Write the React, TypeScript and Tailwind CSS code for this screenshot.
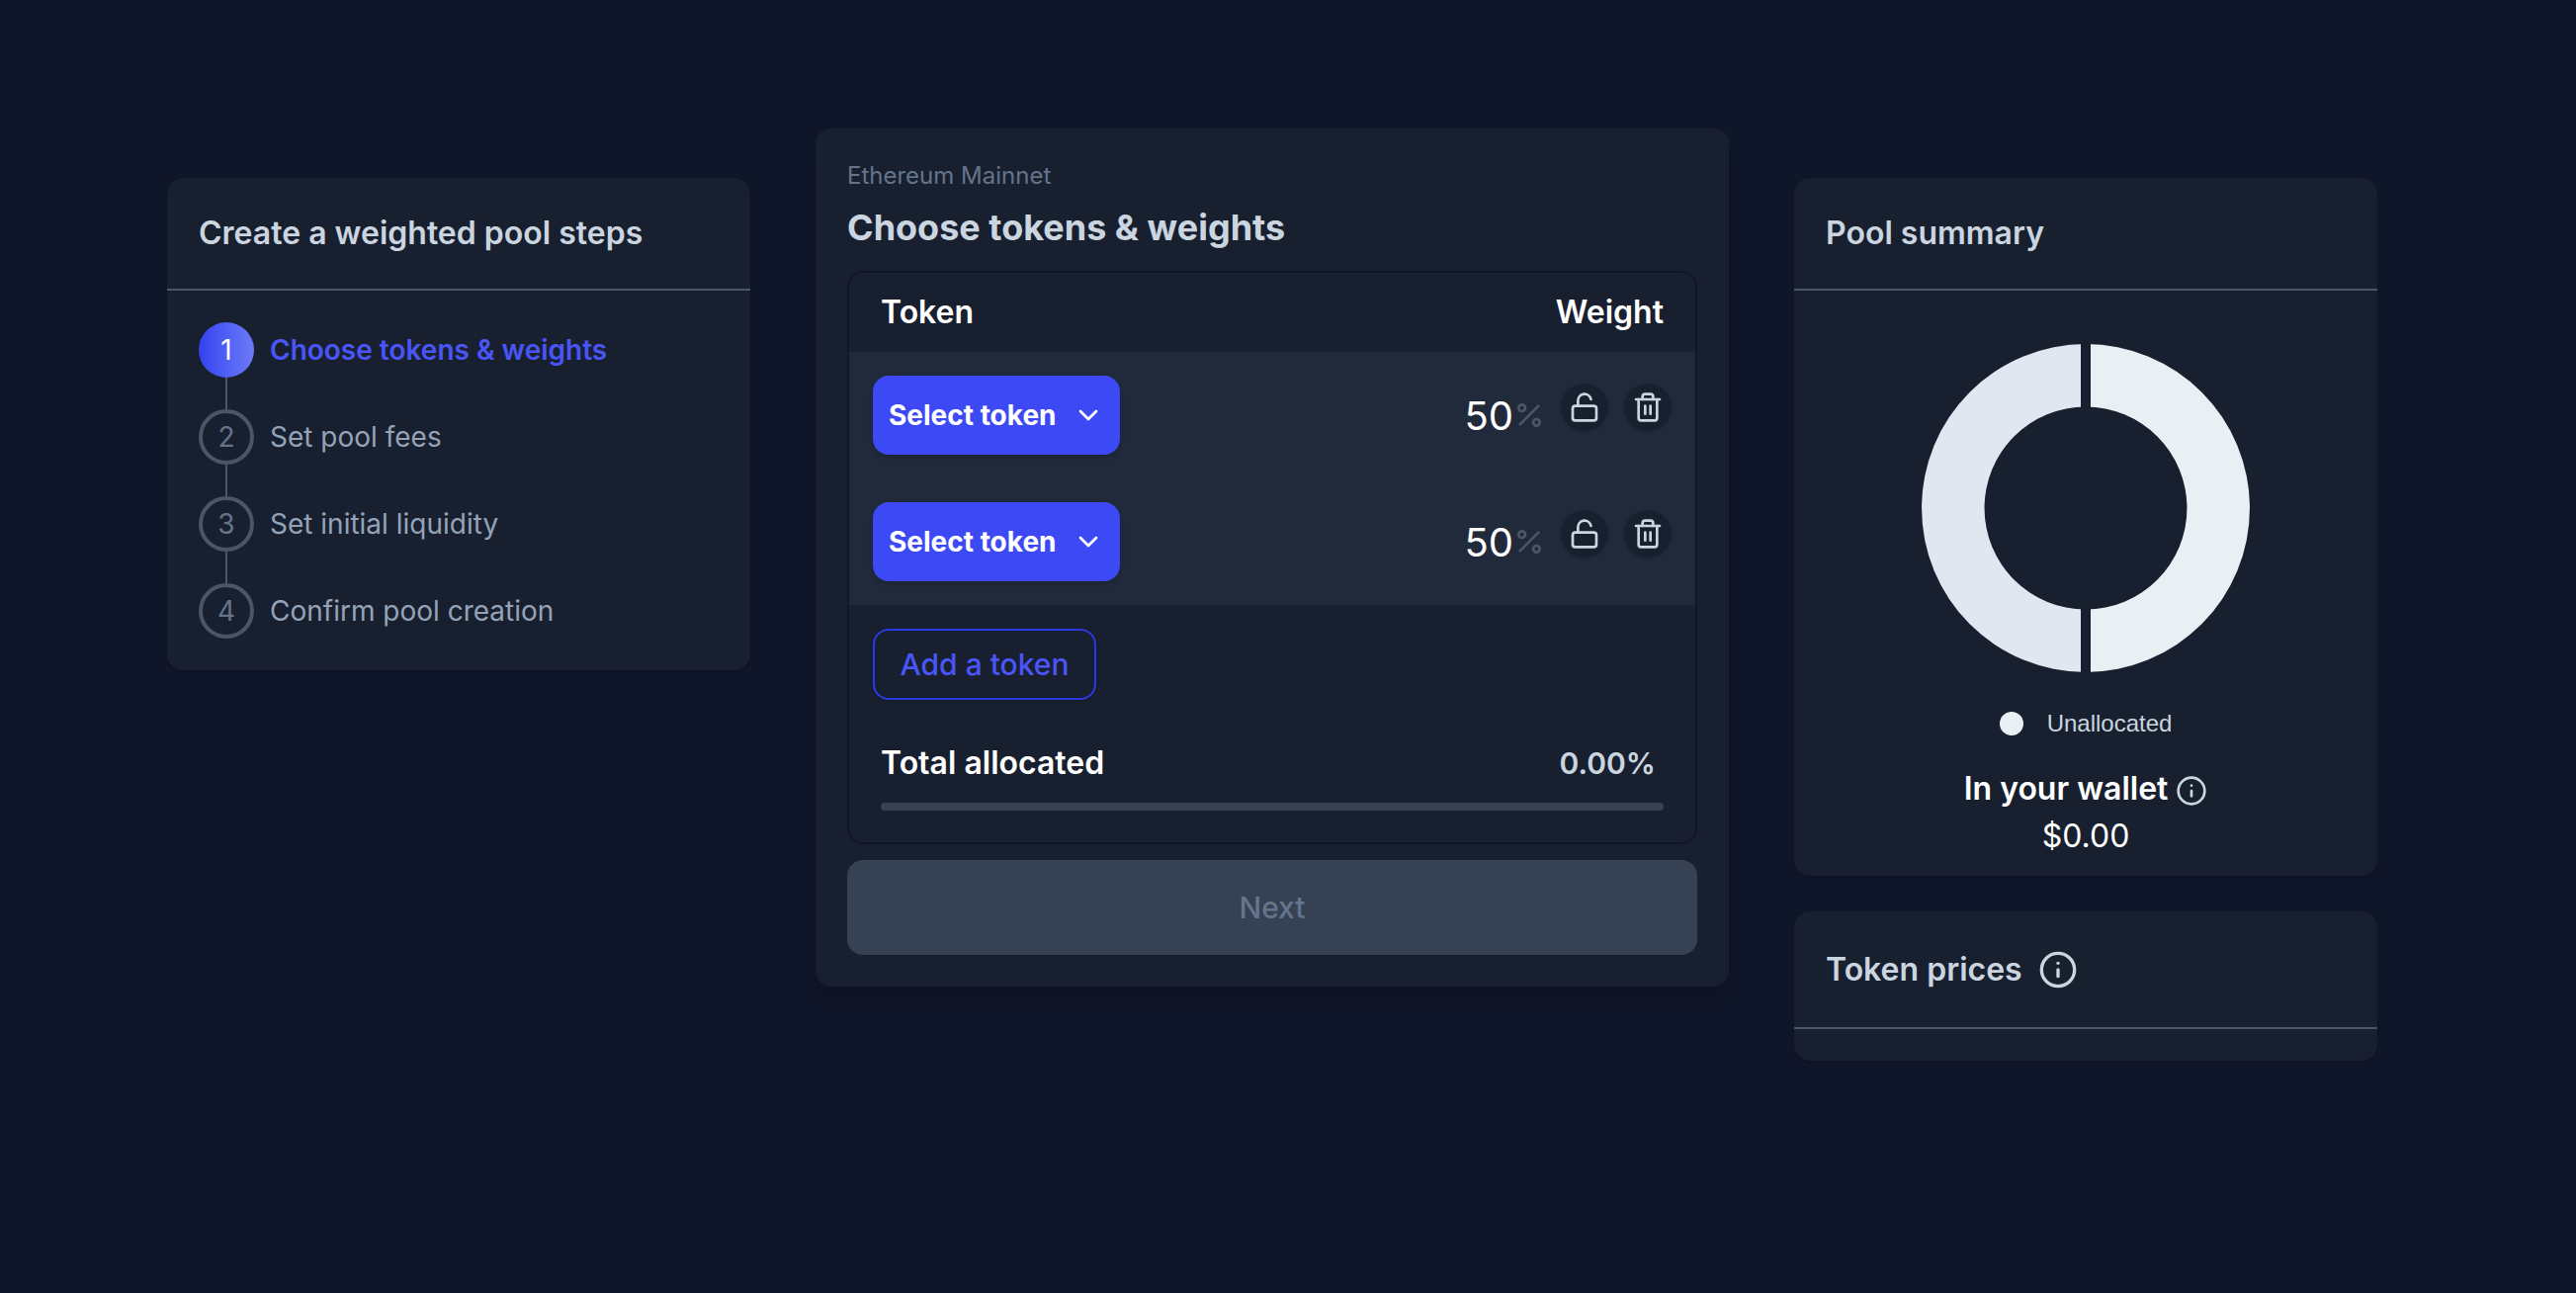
import { useState } from "react";
import { FiChevronDown, FiInfo, FiPercent, FiTrash2, FiUnlock } from "react-icons/fi";

const steps = [
  "Choose tokens & weights",
  "Set pool fees",
  "Set initial liquidity",
  "Confirm pool creation",
];

function StepsCard() {
  return (
    <section className="mt-[50px] rounded-2xl bg-[#18202f] shadow-sm">
      <h2 className="border-b-2 border-[#4a5568] p-8 text-[32px] leading-[48px] font-semibold text-[#cbd5e0]">
        Create a weighted pool steps
      </h2>
      <ol className="p-8 text-[28px] leading-10">
        {steps.map((step, i) => (
          <li key={step}>
            {i > 0 && <div className="ml-[27px] h-8 w-0.5 bg-[#4a5568]" />}
            <a
              href="#"
              aria-current={i === 0 ? "step" : undefined}
              className="flex items-center gap-4"
            >
              <span
                className={
                  i === 0
                    ? "flex size-14 items-center justify-center rounded-full bg-linear-to-r from-[#3440f0] to-[#6f7af8] text-white"
                    : "flex size-14 items-center justify-center rounded-full border-4 border-[#4a5568] text-[#64748b]"
                }
              >
                {i + 1}
              </span>
              <span className={i === 0 ? "font-semibold text-[#4a55f7]" : "text-[#94a3b8]"}>
                {step}
              </span>
            </a>
          </li>
        ))}
      </ol>
    </section>
  );
}

function TokenRow({ index }: { index: number }) {
  const [weight, setWeight] = useState("50");
  return (
    <tr className="h-32 bg-[#212a3a]">
      <td className="pl-6">
        <button
          type="button"
          className="flex h-20 items-center gap-4 rounded-2xl bg-[#3d49f5] px-4 text-[28px] leading-10 font-bold text-white shadow-md"
        >
          Select token
          <FiChevronDown size={32} />
        </button>
      </td>
      <td className="pr-6">
        <div className="flex items-center justify-end">
          <input
            aria-label={`Weight of token ${index}`}
            value={weight}
            onChange={(e) => setWeight(e.target.value)}
            className="w-32 bg-transparent pt-0.5 text-right text-[40px] leading-[60px] text-white outline-none"
          />
          <FiPercent size={32} className="text-[#4a5568]" />
          <div className="mb-4 ml-4 flex gap-4 text-[#cbd5e0]">
            <button
              type="button"
              aria-label="Lock weight"
              className="flex size-12 items-center justify-center rounded-full bg-[#18202f] shadow-sm"
            >
              <FiUnlock size={32} />
            </button>
            <button
              type="button"
              aria-label="Remove token"
              className="flex size-12 items-center justify-center rounded-full bg-[#18202f] shadow-sm"
            >
              <FiTrash2 size={32} />
            </button>
          </div>
        </div>
      </td>
    </tr>
  );
}

function ChooseTokensCard() {
  return (
    <main className="rounded-2xl bg-[#18202f] p-8 shadow-xl">
      <p className="text-2xl leading-8 text-[#64748b]">Ethereum Mainnet</p>
      <h1 className="mt-2 text-4xl leading-[56px] font-bold text-[#cbd5e0]">
        Choose tokens &amp; weights
      </h1>
      <div className="mt-4 overflow-hidden rounded-2xl border-2 border-[#101629] text-[32px] leading-[48px]">
        <table className="w-full">
          <thead>
            <tr className="h-20 text-white">
              <th scope="col" className="pl-8 text-left font-semibold">
                Token
              </th>
              <th scope="col" className="pr-8 text-right font-semibold">
                Weight
              </th>
            </tr>
          </thead>
          <tbody>
            <TokenRow index={1} />
            <TokenRow index={2} />
          </tbody>
        </table>
        <div className="p-6">
          <button
            type="button"
            className="h-18 min-w-[226px] rounded-2xl border-2 border-[#2b38e6] px-6 text-[30px] font-medium text-[#4a55f7] shadow-sm"
          >
            Add a token
          </button>
        </div>
        <div className="px-8 pt-4 pb-8">
          <div className="flex justify-between font-semibold">
            <span className="text-white">Total allocated</span>
            <span className="pr-2 text-[30px] text-[#cbd5e0]">0.00%</span>
          </div>
          <div
            role="progressbar"
            aria-label="Total allocated"
            aria-valuenow={0}
            className="mt-4 h-2 rounded-full bg-[#364153]"
          />
        </div>
      </div>
      <button
        type="button"
        disabled
        className="mt-4 h-24 w-full rounded-2xl bg-[#364153] text-[30px] leading-[48px] font-medium text-[#64748b]"
      >
        Next
      </button>
    </main>
  );
}

function PoolSummary() {
  return (
    <section className="rounded-2xl bg-[#18202f] shadow-sm">
      <h2 className="border-b-2 border-[#4a5568] p-8 text-[32px] leading-[48px] font-semibold text-[#cbd5e0]">
        Pool summary
      </h2>
      <div className="flex flex-col items-center pt-[54px] pb-4">
        <svg width="332" height="332" viewBox="0 0 332 332" role="img" aria-label="Pool allocation">
          <path d="M166 0A166 166 0 0 0 166 332V268.500A102.500 102.500 0 0 1 166 63.500Z" fill="#e2e6f0" />
          <path d="M166 0A166 166 0 0 1 166 332V268.500A102.500 102.500 0 0 0 166 63.500Z" fill="#eaeff4" />
          <path d="M166 0V332" stroke="#18202f" strokeWidth="10" />
        </svg>
        <div className="mt-10 flex items-center gap-6 font-['Liberation_Sans',sans-serif] text-2xl leading-6 text-[#cbd5e0]">
          <span className="size-6 rounded-full bg-[#eaeff4]" />
          Unallocated
        </div>
        <div className="mt-[30px] flex items-center gap-2 text-[32px] leading-[48px] font-semibold text-white">
          In your wallet
          <button type="button" aria-label="About your wallet" className="pt-1 text-[#cbd5e0]">
            <FiInfo size={32} />
          </button>
        </div>
        <p className="text-[32px] leading-[48px] text-white">$0.00</p>
      </div>
    </section>
  );
}

function TokenPrices() {
  return (
    <section className="rounded-2xl bg-[#18202f] pb-8 shadow-sm">
      <div className="flex items-center gap-4 border-b-2 border-[#4a5568] p-8 text-[#cbd5e0]">
        <h2 className="text-[32px] leading-[53px] font-semibold">Token prices</h2>
        <button type="button" aria-label="About token prices">
          <FiInfo size={40} />
        </button>
      </div>
    </section>
  );
}

export default function App() {
  return (
    <div className="min-h-screen bg-[#101629] pt-[130px] pr-8 pb-16 font-['Inter',sans-serif]">
      <div className="mx-auto grid max-w-[2236px] grid-cols-[590fr_924fr_590fr] items-start gap-[66px]">
        <StepsCard />
        <ChooseTokensCard />
        <aside className="mt-[50px] flex flex-col gap-9">
          <PoolSummary />
          <TokenPrices />
        </aside>
      </div>
    </div>
  );
}
